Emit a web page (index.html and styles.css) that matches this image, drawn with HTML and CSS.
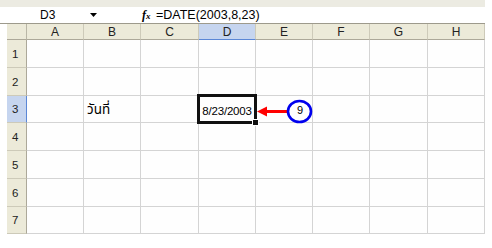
FILE: index.html
```html
<!DOCTYPE html>
<html>
<head>
<meta charset="utf-8">
<link rel="stylesheet" href="styles.css">
</head>
<body>
<div class="app">
  <div class="toolbar"></div>
  <div class="formula">
    <div class="namebox">D3</div>
    <div class="dropdown"><svg width="7" height="4" viewBox="0 0 7 4"><path d="M0 0h7L3.5 4z" fill="#000"/></svg></div>
    <div class="fx"><i>f</i><span>x</span></div>
    <div class="ftext">=DATE(2003,8,23)</div>
  </div>
  <div class="sheet">
    <div class="hd corner"></div>
    <div class="hd col">A</div>
    <div class="hd col">B</div>
    <div class="hd col">C</div>
    <div class="hd col sel">D</div>
    <div class="hd col">E</div>
    <div class="hd col">F</div>
    <div class="hd col">G</div>
    <div class="hd col">H</div>

    <div class="hd row">1</div>
    <div class="c"></div><div class="c"></div><div class="c"></div><div class="c"></div><div class="c"></div><div class="c"></div><div class="c"></div><div class="c"></div>

    <div class="hd row">2</div>
    <div class="c"></div><div class="c"></div><div class="c"></div><div class="c"></div><div class="c"></div><div class="c"></div><div class="c"></div><div class="c"></div>

    <div class="hd row sel">3</div>
    <div class="c"></div><div class="c thai">วันที่</div><div class="c"></div><div class="c active">8/23/2003<span class="handle"></span></div><div class="c"></div><div class="c"></div><div class="c"></div><div class="c"></div>

    <div class="hd row">4</div>
    <div class="c"></div><div class="c"></div><div class="c"></div><div class="c"></div><div class="c"></div><div class="c"></div><div class="c"></div><div class="c"></div>

    <div class="hd row">5</div>
    <div class="c"></div><div class="c"></div><div class="c"></div><div class="c"></div><div class="c"></div><div class="c"></div><div class="c"></div><div class="c"></div>

    <div class="hd row">6</div>
    <div class="c"></div><div class="c"></div><div class="c"></div><div class="c"></div><div class="c"></div><div class="c"></div><div class="c"></div><div class="c"></div>

    <div class="hd row">7</div>
    <div class="c"></div><div class="c"></div><div class="c"></div><div class="c"></div><div class="c"></div><div class="c"></div><div class="c"></div><div class="c"></div>

    <div class="callout">
      <svg width="60" height="30" viewBox="0 0 60 30">
        <path d="M9 15.5H31" stroke="#f00" stroke-width="3"/>
        <path d="M0 15.5L10 10.5V20.5z" fill="#f00"/>
        <ellipse cx="42.5" cy="15.5" rx="11.5" ry="10.5" fill="#fff" stroke="#0000ee" stroke-width="2.6"/>
      </svg>
      <span class="num">9</span>
    </div>
  </div>
</div>
</body>
</html>
```
FILE: styles.css
```css
html, body {
  margin: 0;
  padding: 0;
  background: #fff;
}
.app {
  width: 485px;
  font-family: "Liberation Sans", Arial, sans-serif;
  color: #000;
}
.toolbar {
  height: 7px;
  background: #ecebe2;
}
.formula {
  height: 16px;
  display: flex;
  align-items: center;
  background: #fff;
  border-bottom: 1px solid #9d9a8c;
  font-size: 12px;
}
.namebox {
  width: 80px;
  padding-left: 40px;
  box-sizing: border-box;
}
.dropdown {
  width: 20px;
  padding-left: 10px;
  display: flex;
  align-items: center;
  box-sizing: border-box;
  height: 16px;
}
.fx {
  margin-left: 42px;
  width: 14px;
  font-family: "Liberation Serif", serif;
  font-size: 12px;
  font-weight: bold;
}
.fx span {
  font-size: 9px;
  font-style: italic;
}
.ftext {
  margin-left: 0;
  font-size: 12.5px;
}
.sheet {
  position: relative;
  margin-left: 7px;
  display: grid;
  grid-template-columns: 20px 57px 57px 58px 57px 57px 57px 58px 57px;
  grid-template-rows: 16px 28px 28px 27px 28px 28px 28px 27px;
}
.hd {
  background: #ecead9;
  box-sizing: border-box;
  font-size: 12px;
  color: #222;
}
.corner {
  border-right: 1px solid #b9b6a6;
  border-bottom: 1px solid #aca899;
}
.col {
  display: flex;
  align-items: center;
  justify-content: center;
  border-right: 1px solid #cdcab9;
  border-bottom: 1px solid #aca899;
}
.col.sel {
  background: #c6d5ef;
  border-bottom: 1px solid #5b87d6;
}
.row {
  display: flex;
  align-items: center;
  padding-left: 5px;
  border-right: 1px solid #aca899;
  border-bottom: 1px solid #cdcab9;
  font-size: 11.5px;
}
.row.sel {
  background: #c6d5ef;
  border-right: 1px solid #5b87d6;
}
.c {
  box-sizing: border-box;
  border-right: 1px solid #d4d4d4;
  border-bottom: 1px solid #d4d4d4;
  background: #fefefe;
  font-size: 12px;
  display: flex;
  align-items: center;
}
.thai {
  padding-left: 3px;
  font-family: "Noto Sans Thai", "Tahoma", "DejaVu Sans", sans-serif;
  font-size: 13.5px;
  padding-top: 2px;
}
.active {
  position: relative;
  justify-content: center;
  padding-top: 3px;
  font-size: 11.5px;
  letter-spacing: -0.2px;
}
.active::before {
  content: "";
  position: absolute;
  left: -2px;
  top: -2px;
  right: -2px;
  bottom: -2px;
  border: 3px solid #111;
}
.handle {
  position: absolute;
  right: -4px;
  bottom: -4px;
  width: 5px;
  height: 5px;
  background: #111;
  border: 1px solid #fff;
}
.callout {
  position: absolute;
  left: 250px;
  top: 72px;
  width: 60px;
  height: 30px;
}
.callout svg {
  display: block;
}
.num {
  position: absolute;
  left: 37px;
  top: 8px;
  width: 12px;
  text-align: center;
  font-family: "Liberation Sans", Arial, sans-serif;
  font-size: 11px;
}
```
